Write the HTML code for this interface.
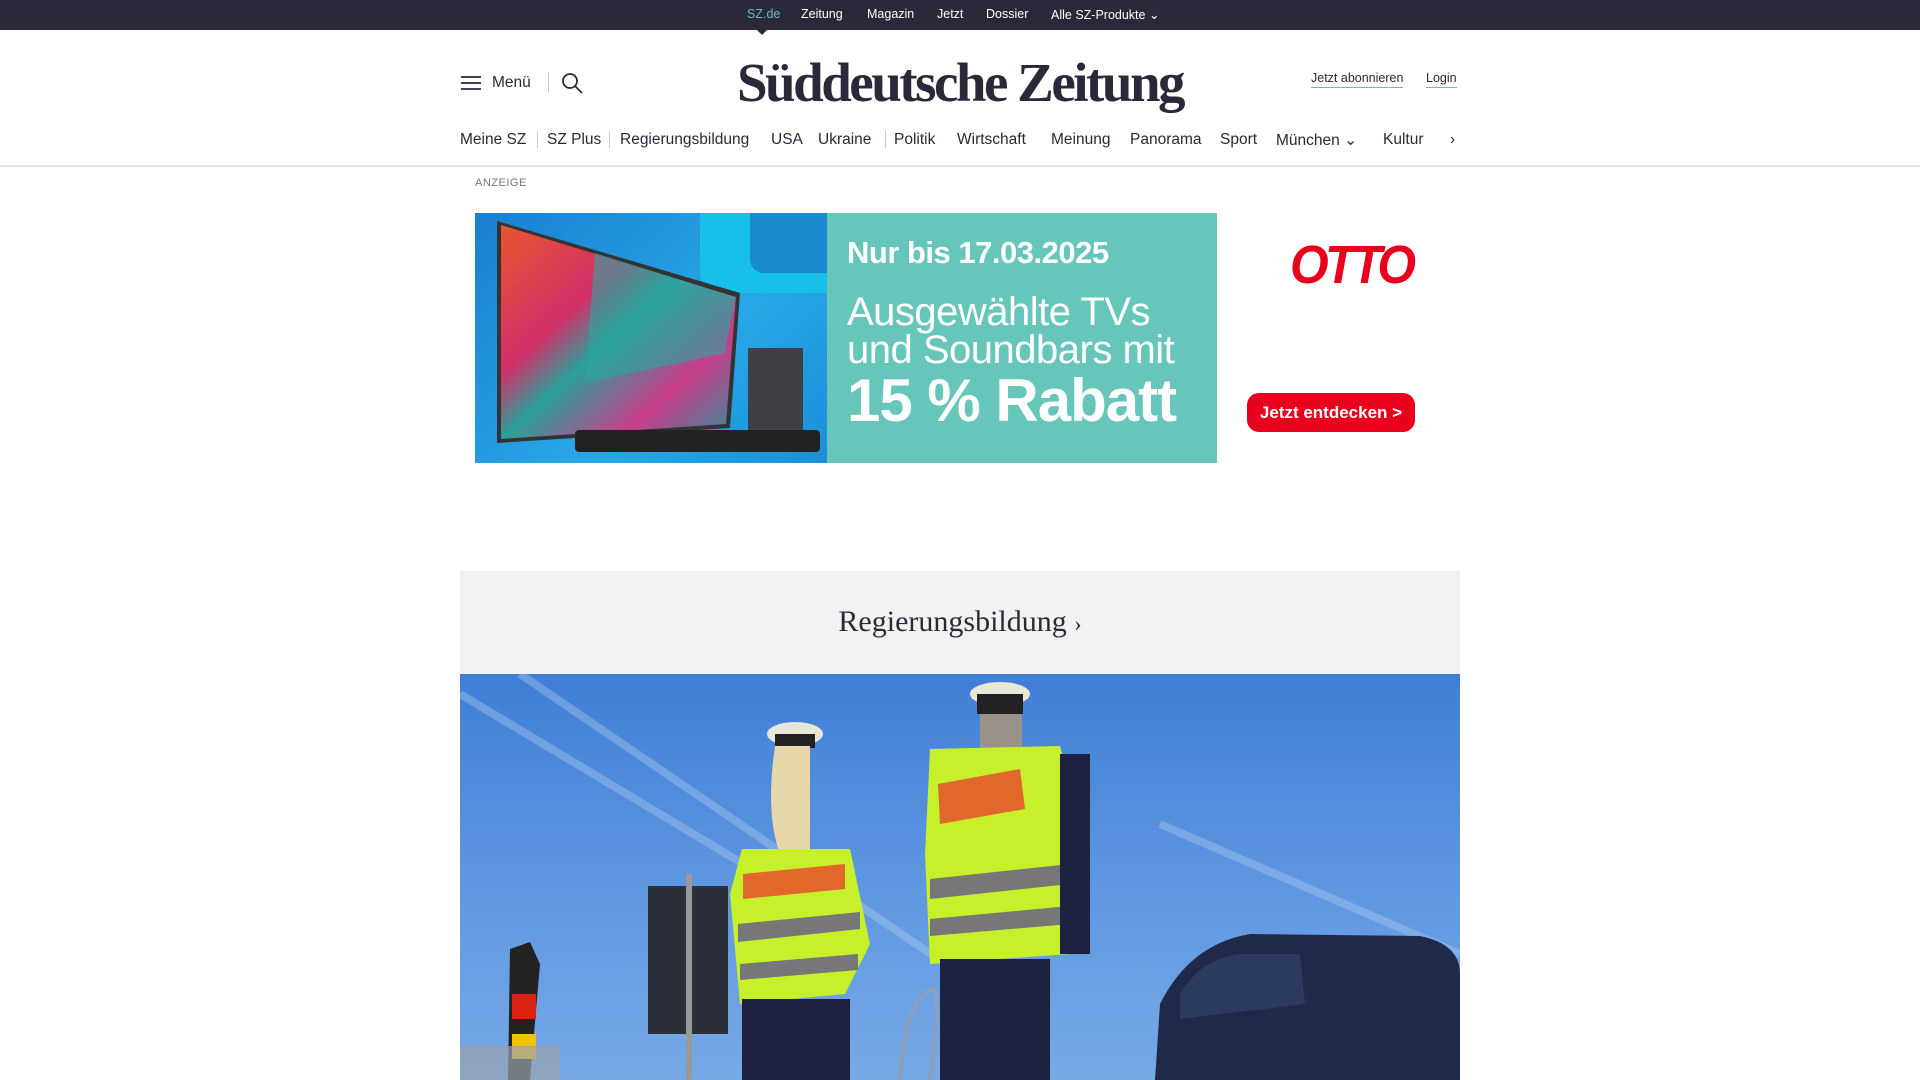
<!DOCTYPE html>
<html><head><meta charset="utf-8">
<style>
*{margin:0;padding:0;box-sizing:border-box}
body{width:1920px;height:1080px;overflow:hidden;background:#fff;font-family:"Liberation Sans",sans-serif;color:#29293a;position:relative}
.a{position:absolute}
.top{left:0;top:0;width:1920px;height:30px;background:#29293a}
.top span{position:absolute;top:7px;font-size:12.5px;color:#fff}
.nav span{position:absolute;top:131px;font-size:15.5px;color:#29293a}
.sep{position:absolute;width:1px;background:#c8c8cc}
</style></head><body>
<div class="a top">
<span style="left:747px;color:#72b6c8">SZ.de</span>
<span style="left:801px">Zeitung</span>
<span style="left:867px">Magazin</span>
<span style="left:937px">Jetzt</span>
<span style="left:986px">Dossier</span>
<span style="left:1051px">Alle SZ-Produkte &#8964;</span>
</div>
<div class="a" style="left:756px;top:29px;width:0;height:0;border-left:6px solid transparent;border-right:6px solid transparent;border-top:6px solid #29293a"></div>

<svg class="a" style="left:461px;top:75px" width="20" height="16"><path d="M0 2H20M0 8H20M0 14H20" stroke="#29293a" stroke-width="1.8"/></svg>
<div class="a" style="left:492px;top:74px;font-size:15.5px">Menü</div>
<div class="sep" style="left:548px;top:72px;height:20px"></div>
<svg class="a" style="left:561px;top:72px" width="22" height="22"><circle cx="9" cy="9" r="7" fill="none" stroke="#29293a" stroke-width="1.8"/><path d="M14 14L21 21" stroke="#29293a" stroke-width="1.8"/></svg>
<div class="a" style="left:700px;top:51px;width:520px;text-align:center;font-family:'Liberation Serif',serif;font-weight:bold;font-size:55px;letter-spacing:-2.5px;color:#29293a;white-space:nowrap">Süddeutsche Zeitung</div>
<div class="a" style="left:1311px;top:71px;font-size:12.5px;border-bottom:1px solid #72b6c8;padding-bottom:2px">Jetzt abonnieren</div>
<div class="a" style="left:1426px;top:71px;font-size:12.5px;border-bottom:1px solid #72b6c8;padding-bottom:2px">Login</div>

<div class="nav">
<span style="left:460px">Meine SZ</span>
<span style="left:547px">SZ Plus</span>
<span style="left:620px">Regierungsbildung</span>
<span style="left:771px">USA</span>
<span style="left:818px">Ukraine</span>
<span style="left:894px">Politik</span>
<span style="left:957px">Wirtschaft</span>
<span style="left:1051px">Meinung</span>
<span style="left:1130px">Panorama</span>
<span style="left:1220px">Sport</span>
<span style="left:1276px">München &#8964;</span>
<span style="left:1383px">Kultur</span>
<span style="left:1450px">›</span>
</div>
<div class="sep" style="left:537px;top:131px;height:17px"></div>
<div class="sep" style="left:609px;top:131px;height:17px"></div>
<div class="sep" style="left:885px;top:131px;height:17px"></div>
<div class="a" style="left:0;top:165px;width:1920px;height:2px;background:#e4e4e6"></div>

<div class="a" style="left:475px;top:177px;font-size:11px;color:#757575;letter-spacing:.5px">ANZEIGE</div>

<div class="a" style="left:475px;top:213px;width:352px;height:250px;background:#1e8fd6;overflow:hidden">
 <div class="a" style="left:0;top:0;width:352px;height:250px;background:linear-gradient(135deg,#1a7fd0,#28a7e8 60%,#1b8fd8)"></div>
 <div class="a" style="left:225px;top:0;width:127px;height:80px;background:#16c0e8;border-radius:0 0 0 20px"></div>
 <div class="a" style="left:275px;top:0;width:77px;height:60px;background:#1c8ad0;border-radius:0 0 0 14px"></div>
 <svg class="a" style="left:0;top:0" width="352" height="250">
  <defs><linearGradient id="g" x1="0" y1="0" x2="1" y2="1"><stop offset="0" stop-color="#e8552c"/><stop offset=".35" stop-color="#d2306a"/><stop offset=".5" stop-color="#2aa19a"/><stop offset=".75" stop-color="#c83d8a"/><stop offset="1" stop-color="#2f8f9a"/></linearGradient></defs>
  <polygon points="22,8 265,80 255,215 22,230" fill="#333"/>
  <polygon points="26,12 261,84 251,211 26,226" fill="url(#g)"/>
  <polygon points="120,40 260,84 250,140 110,170" fill="#2aa6a0" opacity=".6"/>
  <rect x="273" y="135" width="55" height="90" fill="#3e3e44"/>
  <rect x="100" y="217" width="245" height="22" rx="4" fill="#222"/>
 </svg>
</div>
<div class="a" style="left:827px;top:213px;width:390px;height:250px;background:#66c6b9;color:#fff">
 <div class="a" style="left:20px;top:22px;font-size:31px;font-weight:bold;letter-spacing:-.5px">Nur bis 17.03.2025</div>
 <div class="a" style="left:20px;top:80px;font-size:40px;line-height:38px;letter-spacing:-.5px">Ausgewählte TVs<br>und Soundbars mit</div>
 <div class="a" style="left:20px;top:153px;font-size:60px;font-weight:bold;letter-spacing:-1px">15 % Rabatt</div>
</div>
<div class="a" style="left:1290px;top:234px;font-size:54px;font-weight:bold;font-style:italic;color:#e8001d;letter-spacing:-4px;transform:scaleX(.92);transform-origin:left">OTTO</div>
<div class="a" style="left:1247px;top:393px;width:168px;height:39px;border-radius:12px;background:#e8001d;color:#fff;font-weight:bold;font-size:17px;text-align:center;line-height:39px">Jetzt entdecken &gt;</div>

<div class="a" style="left:460px;top:571px;width:1000px;height:103px;background:#f2f2f2"></div>
<div class="a" style="left:460px;top:605px;width:1000px;text-align:center;font-family:'Liberation Serif',serif;font-size:30px;color:#29293a">Regierungsbildung <span style="font-size:22px">›</span></div>

<div class="a" style="left:460px;top:674px;width:1000px;height:406px;overflow:hidden;background:linear-gradient(180deg,#3f7fd6,#5d96e0 50%,#77a9e6)">
 <svg class="a" style="left:0;top:0" width="1000" height="406">
  <path d="M0 20 L400 260 M60 0 L500 300 M700 150 L1000 280" stroke="#b9d3f2" stroke-width="8" opacity=".35"/>
  <rect x="188" y="212" width="80" height="148" fill="#2a2f3a"/><rect x="226" y="200" width="6" height="206" fill="#999"/>
  <polygon points="50,275 70,268 80,290 70,406 48,406" fill="#222"/>
  <rect x="52" y="320" width="24" height="25" fill="#d21"/><rect x="52" y="360" width="24" height="25" fill="#f2c200"/>
  <rect x="0" y="372" width="100" height="34" fill="#9aa3ad" opacity=".7"/>
  <ellipse cx="335" cy="60" rx="28" ry="12" fill="#e8e6d8"/><rect x="315" y="60" width="40" height="14" fill="#222"/>
  <path d="M315 72 Q305 140 320 180 L350 180 L350 72Z" fill="#e5d7a8"/>
  <path d="M282 175 L390 175 L410 270 L385 320 L280 330 L270 220Z" fill="#c6f02a"/>
  <path d="M283 200 L385 190 L385 215 L283 225Z" fill="#e8452a" opacity=".8"/>
  <path d="M278 250 L400 238 L400 255 L278 268Z M280 290 L398 280 L398 296 L280 306Z" fill="#777"/>
  <rect x="282" y="325" width="108" height="81" fill="#1c2240"/>
  <ellipse cx="540" cy="20" rx="30" ry="12" fill="#e8e6d8"/><rect x="517" y="20" width="46" height="20" fill="#222"/>
  <rect x="520" y="40" width="42" height="38" fill="#9a9188"/>
  <path d="M470 75 L600 72 L625 170 L610 280 L470 290 L465 180Z" fill="#c6f02a"/>
  <path d="M478 110 L560 95 L565 135 L480 150Z" fill="#e8452a" opacity=".8"/>
  <path d="M470 205 L610 190 L610 210 L470 225Z M470 245 L610 232 L610 250 L470 262Z" fill="#777"/>
  <rect x="600" y="80" width="30" height="200" fill="#1c2240"/>
  <rect x="480" y="285" width="110" height="121" fill="#1c2240"/>
  <path d="M695 406 L700 330 Q730 270 790 260 L960 262 Q1000 270 1000 300 L1000 406Z" fill="#1f2a4a"/>
  <path d="M720 320 Q740 285 780 280 L840 280 L845 330 L720 345Z" fill="#2b3a5e"/>
  <path d="M440 406 Q445 320 475 315 Q480 330 470 406" fill="none" stroke="#8aa0bc" stroke-width="4"/>
 </svg>
</div>
</body></html>
